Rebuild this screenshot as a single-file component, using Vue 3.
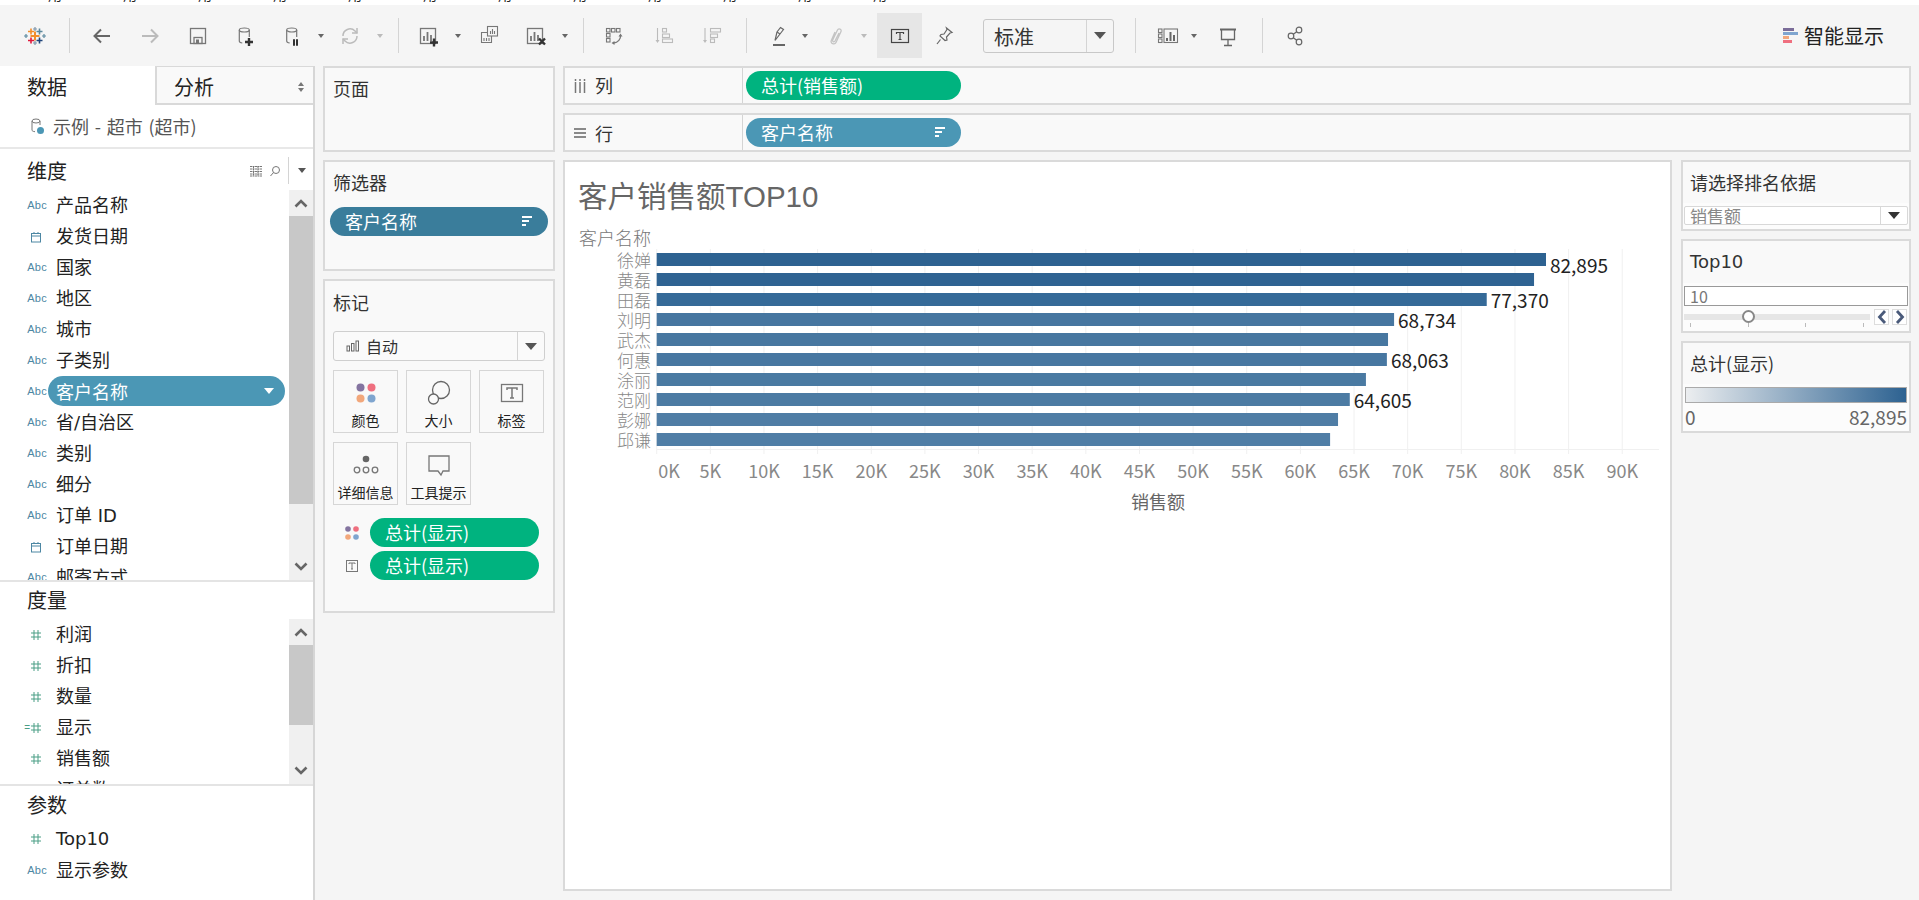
<script setup>
const dims = [
  { n: '产品名称', t: 'abc' }, { n: '发货日期', t: 'date' }, { n: '国家', t: 'abc' }, { n: '地区', t: 'abc' },
  { n: '城市', t: 'abc' }, { n: '子类别', t: 'abc' }, { n: '客户名称', t: 'abc', pill: true }, { n: '省/自治区', t: 'abc' },
  { n: '类别', t: 'abc' }, { n: '细分', t: 'abc' }, { n: '订单 ID', t: 'abc' }, { n: '订单日期', t: 'date' }, { n: '邮寄方式', t: 'abc' }
]
const measures = [
  { n: '利润' }, { n: '折扣' }, { n: '数量' }, { n: '显示', calc: true }, { n: '销售额' }, { n: '订单数' }
]
const x0 = 656.7
const k = 0.010728
const bars = [
  { name: '徐婵', v: 82895, c: '#2d6291', show: true, dy: 5 },
  { name: '黄磊', v: 81780, c: '#2f6392' },
  { name: '田磊', v: 77370, c: '#356a98', show: true, dy: 0 },
  { name: '刘明', v: 68734, c: '#4676a0', show: true, dy: 0 },
  { name: '武杰', v: 68170, c: '#4777a0' },
  { name: '何惠', v: 68063, c: '#4777a1', show: true, dy: 0 },
  { name: '涂丽', v: 66110, c: '#4a7aa2' },
  { name: '范刚', v: 64605, c: '#4c7ba3', show: true, dy: 0 },
  { name: '彭娜', v: 63510, c: '#4f7da5' },
  { name: '邱谦', v: 62770, c: '#507ea6' }
].map((b, i) => ({
  ...b,
  y: 253 + i * 20,
  w: b.v * k,
  label: b.v.toLocaleString('en-US')
}))
const ticks = Array.from({ length: 19 }, (_, i) => ({
  x: x0 + i * 5000 * k,
  lx: i === 0 ? 669 : x0 + i * 5000 * k,
  t: i * 5 + 'K'
}))
const topBits = Array.from({ length: 12 })
</script>

<template>
  <div class="page">
    <div class="strip"><span v-for="(_, i) in topBits" :key="i">用</span></div>

    <header class="toolbar">
      <span class="logo">
        <svg width="24" height="24" viewBox="0 0 24 24" fill="none" stroke-width="1.6">
          <path d="M12 7.500v9M7.500 12h9" stroke="#f28e2b" stroke-width="2"/>
          <path d="M8 4.500v6M5 7.500h6" stroke="#f28e2b"/>
          <path d="M16.500 4.500v6M13.500 7.500h6" stroke="#5b879b"/>
          <path d="M8 13.500v6M5 16.500h6" stroke="#e1193c"/>
          <path d="M16.500 13.500v6M13.500 16.500h6" stroke="#1f447a"/>
          <path d="M12 3v4M10 5h4M12 17v4M10 19h4" stroke="#7e96ab" stroke-width="1.2"/>
          <path d="M3 10v4M1 12h4M21 10v4M19 12h4" stroke="#5d8aa0" stroke-width="1.2"/>
        </svg>
      </span>
      <i class="sep"></i>
      <span class="ic w48 ml8"><svg width="24" height="24" viewBox="0 0 24 24" fill="none" stroke="#666" stroke-width="2"><path d="M20 12H5M11 5.500 4.500 12l6.500 6.500"/></svg></span>
      <span class="ic w48"><svg width="24" height="24" viewBox="0 0 24 24" fill="none" stroke="#bbb" stroke-width="2"><path d="M4 12h15M13 5.500l6.500 6.500-6.500 6.500"/></svg></span>
      <span class="ic w48"><svg width="24" height="24" viewBox="0 0 24 24" fill="none" stroke="#777" stroke-width="1.300"><rect x="4.500" y="4.500" width="15" height="15"/><rect x="8" y="13.500" width="8" height="6"/><rect x="10" y="15.500" width="3" height="4" fill="#777" stroke="none"/></svg></span>
      <span class="ic w48"><svg width="24" height="24" viewBox="0 0 24 24" fill="none" stroke="#777" stroke-width="1.200"><ellipse cx="10.300" cy="6" rx="5" ry="2"/><path d="M5.300 6v11c0 1 1 1.800 3 2M15.300 6v7"/><path d="M15 14v8M11 18h8" stroke="#333" stroke-width="2.400"/></svg></span>
      <span class="ic w44"><svg width="24" height="24" viewBox="0 0 24 24" fill="none" stroke="#777" stroke-width="1.200"><ellipse cx="11.700" cy="6" rx="5" ry="2"/><path d="M6.700 6v11c0 1 1 1.800 3 2M16.700 6v7"/><path d="M14 15.300v6.400M17 15.300v6.400" stroke="#333" stroke-width="2"/></svg></span>
      <i class="caret ml3"></i>
      <span class="ic w44 ml3"><svg width="24" height="24" viewBox="0 0 24 24" fill="none" stroke="#bbb" stroke-width="1.500"><path d="M5 12a7 7 0 0 1 12-5l2 2M19 12a7 7 0 0 1-12 5l-2-2"/><path d="M19 4v5h-5M5 20v-5h5"/></svg></span>
      <i class="caret light ml4"></i>
      <i class="sep ml14"></i>
      <span class="ic w44 ml8"><svg width="24" height="24" viewBox="0 0 24 24" fill="none" stroke="#777" stroke-width="1.300"><rect x="3.500" y="4.500" width="15" height="15"/><path d="M7 17v-5M10.500 17V8M14 17v-6" stroke-width="1.800"/><path d="M17 14.500v8M13 18.500h8" stroke="#333" stroke-width="2.400"/></svg></span>
      <i class="caret ml3"></i>
      <span class="ic w44 ml5"><svg width="24" height="24" viewBox="0 0 24 24" fill="none" stroke="#777" stroke-width="1.100"><rect x="10.500" y="2.500" width="10" height="9.500"/><path d="M13.500 10V7M15.500 10V5M17.500 10V7"/><path d="M10.500 8.500H4.500v10h10V12"/><path d="M7 17v-3M9.500 17v-3M12 17v-3"/></svg></span>
      <span class="ic w44 ml3"><svg width="24" height="24" viewBox="0 0 24 24" fill="none" stroke="#777" stroke-width="1.300"><rect x="3.500" y="4.500" width="15" height="15"/><path d="M7 17v-5M10.500 17V8M14 17v-6" stroke-width="1.800"/><path d="M15 14.500l6 6M21 14.500l-6 6" stroke="#333" stroke-width="2.400"/></svg></span>
      <i class="caret ml3"></i>
      <i class="sep ml14"></i>
      <span class="ic w44 ml9"><svg width="24" height="24" viewBox="0 0 24 24" fill="none" stroke="#777" stroke-width="1.100"><rect x="3.500" y="4.500" width="3.500" height="3.500"/><rect x="8.500" y="4.500" width="3.500" height="3.500"/><rect x="13.500" y="4.500" width="3.500" height="3.500"/><rect x="3.500" y="9.500" width="3.500" height="3.500"/><rect x="3.500" y="14.500" width="3.500" height="3.500"/><path d="M17.500 11c.5 4-2.500 7.500-7 8" stroke-width="1.300"/><path d="M15.500 12.500 17.500 9.500l2 3zM11.500 17l-3 2 3 2z" fill="#777" stroke="none"/></svg></span>
      <span class="ic w44 ml5"><svg width="24" height="24" viewBox="0 0 24 24" fill="none" stroke="#bbb" stroke-width="1.100"><path d="M5.500 4v13"/><path d="M3.500 16h4l-2 3z" fill="#bbb" stroke="none"/><rect x="10.500" y="4.500" width="4" height="3.500"/><rect x="10.500" y="10" width="7" height="3.500"/><rect x="10.500" y="15" width="10" height="3.500"/></svg></span>
      <span class="ic w44 ml3"><svg width="24" height="24" viewBox="0 0 24 24" fill="none" stroke="#bbb" stroke-width="1.100"><path d="M6 4v13"/><path d="M4 16h4l-2 3z" fill="#bbb" stroke="none"/><rect x="11.500" y="4.500" width="10" height="3.500"/><rect x="11.500" y="10" width="7" height="3.500"/><rect x="11.500" y="15" width="4" height="3.500"/></svg></span>
      <i class="sep ml13"></i>
      <span class="ic w44 ml10"><svg width="24" height="24" viewBox="0 0 24 24" fill="none" stroke="#666" stroke-width="1.200"><path d="M8 16.500 10 8l3.500-4.500 3 2L13 10z"/><path d="M10 8l3 2"/><path d="M6 21h12" stroke="#666" stroke-width="2"/></svg></span>
      <i class="caret"></i>
      <span class="ic w44 ml5"><svg width="24" height="24" viewBox="0 0 24 24" fill="none" stroke="#c4c4c4" stroke-width="1.300"><path d="M15 9l-4 8c-.8 1.500-3 .6-2.300-1l4.800-10c1-2.200 4.500-.8 3.500 1.500L12 18.500c-1.300 2.700-6 1-4.700-2L11 8"/></svg></span>
      <i class="caret light ml2"></i>
      <span class="ic tbtn ml9"><svg width="24" height="24" viewBox="0 0 24 24" fill="none" stroke="#444" stroke-width="1.200"><rect x="3.500" y="5.500" width="17" height="13"/><path d="M8.500 10V8.500h7V10M12 8.500v7M10.500 15.500h3"/></svg></span>
      <span class="ic w44"><svg width="24" height="24" viewBox="0 0 24 24" fill="none" stroke="#666" stroke-width="1.200"><path d="M14.500 4 20 8.500l-2 .5-3.500 4 .5 3-2 .5-5-4.500 1-1.500 3-.5 3-4.500z"/><path d="M8.500 15.500 5 20"/></svg></span>
      <div class="fit ml17"><span class="fit-t">标准</span><span class="fit-a"><i class="tri big"></i></span></div>
      <i class="sep ml21"></i>
      <span class="ic w44 ml10"><svg width="24" height="24" viewBox="0 0 24 24" fill="none" stroke="#777" stroke-width="1.100"><rect x="2.500" y="5" width="3.500" height="3.500"/><rect x="2.500" y="10" width="3.500" height="3.500"/><rect x="2.500" y="15" width="3.500" height="3.500"/><rect x="8" y="5" width="13.500" height="13.500"/><path d="M11 17v-3M14.500 17V8M18 17v-6" stroke="#666" stroke-width="2"/></svg></span>
      <i class="caret"></i>
      <span class="ic w44 ml8"><svg width="24" height="24" viewBox="0 0 24 24" fill="none" stroke="#666" stroke-width="1.300"><path d="M4 5.500h16" stroke-width="2"/><path d="M5.500 5.500v10h13v-10M12 15.500v6M8 21.500h8"/></svg></span>
      <i class="sep ml12"></i>
      <span class="ic w44 ml10"><svg width="24" height="24" viewBox="0 0 24 24" fill="none" stroke="#666" stroke-width="1.200"><circle cx="16" cy="6" r="2.800"/><circle cx="8" cy="12" r="2.800"/><circle cx="16" cy="18" r="2.800"/><path d="m10.300 10.300 3.400-2.600M10.300 13.700l3.400 2.600"/></svg></span>
      <div class="smart">
        <svg width="16" height="18" viewBox="0 0 16 18"><rect x="1" y="1" width="11" height="3" fill="#7b6d99"/><rect x="1" y="5" width="15" height="3" fill="#7fa5cf"/><rect x="1" y="9" width="6" height="3" fill="#f2a77b"/><rect x="1" y="13" width="9" height="3" fill="#ef6f7f"/></svg>
        <span>智能显示</span>
      </div>
    </header>

    <main class="main">
      <aside class="side">
        <div class="tabs">
          <div class="tab on">数据</div>
          <div class="tab off">分析<span class="updown"></span></div>
        </div>
        <div class="source">
          <svg width="16" height="20" viewBox="0 0 16 20" fill="none" stroke="#777" stroke-width="1"><ellipse cx="6" cy="5" rx="4" ry="2"/><path d="M2 5v9c0 1 1 1.500 3 1.700M10 5v4"/><circle cx="10.500" cy="14.500" r="3.500" fill="#4b97b5" stroke="none"/></svg>
          <span>示例 - 超市 (超市)</span>
        </div>
        <div class="head dim-head">
          <span class="head-t">维度</span>
          <span class="head-tools">
            <svg width="14" height="12" viewBox="0 0 14 12" stroke="#777" fill="none"><path d="M1 1.500h12M1 4h12M1 6.500h12M1 9h12M1 11h12M4.500 1v10M9 1v10" stroke-dasharray="2 .5"/></svg>
            <svg width="12" height="12" viewBox="0 0 12 12" stroke="#777" fill="none"><circle cx="7" cy="5" r="3.500"/><path d="M4.500 7.500 1.500 11"/></svg>
            <i class="vline"></i>
            <i class="tri small"></i>
          </span>
        </div>
        <div class="list dim">
          <div class="rows">
            <div v-for="d in dims" :key="d.n" class="row">
              <span class="ficon">
                <span v-if="d.t === 'abc'" class="abc">Abc</span>
                <svg v-else width="12" height="12" viewBox="0 0 12 12" fill="none" stroke="#4d87a3"><rect x="1.500" y="2.500" width="9" height="8.500"/><path d="M1.500 5h9M4 1v2M8 1v2"/></svg>
              </span>
              <span v-if="d.pill" class="pill side-pill">{{ d.n }}<i class="tri white"></i></span>
              <span v-else class="fname">{{ d.n }}</span>
            </div>
          </div>
          <div class="scroll">
            <span class="sarrow"><svg width="14" height="10" viewBox="0 0 14 10" fill="none" stroke="#666" stroke-width="2.600"><path d="M1.500 8.500 7 3l5.500 5.500"/></svg></span>
            <span class="thumb dim-thumb"></span>
            <span class="sfill"></span>
            <span class="sarrow"><svg width="14" height="10" viewBox="0 0 14 10" fill="none" stroke="#666" stroke-width="2.600"><path d="M1.500 1.500 7 7l5.500-5.500"/></svg></span>
          </div>
        </div>
        <div class="head line measure-head"><span class="head-t">度量</span></div>
        <div class="list mea">
          <div class="rows">
            <div v-for="m in measures" :key="m.n" class="row">
              <span class="ficon">
                <i v-if="m.calc" class="calc">=</i>
                <svg width="12" height="12" viewBox="0 0 12 12" fill="none" stroke="#4a9e85" stroke-width="1"><path d="M4 1v10M8 1v10M1 4h10M1 8h10"/></svg>
              </span>
              <span class="fname">{{ m.n }}</span>
            </div>
          </div>
          <div class="scroll">
            <span class="sarrow"><svg width="14" height="10" viewBox="0 0 14 10" fill="none" stroke="#666" stroke-width="2.600"><path d="M1.500 8.500 7 3l5.500 5.500"/></svg></span>
            <span class="thumb mea-thumb"></span>
            <span class="sfill"></span>
            <span class="sarrow"><svg width="14" height="10" viewBox="0 0 14 10" fill="none" stroke="#666" stroke-width="2.600"><path d="M1.500 1.500 7 7l5.500-5.500"/></svg></span>
          </div>
        </div>
        <div class="head line param-head"><span class="head-t">参数</span></div>
        <div class="row">
          <span class="ficon"><svg width="12" height="12" viewBox="0 0 12 12" fill="none" stroke="#4a9e85"><path d="M4 1v10M8 1v10M1 4h10M1 8h10"/></svg></span>
          <span class="fname">Top10</span>
        </div>
        <div class="row param-2">
          <span class="ficon"><span class="abc">Abc</span></span>
          <span class="fname">显示参数</span>
        </div>
      </aside>

      <section class="cards">
        <div class="card c-page"><div class="card-t">页面</div></div>
        <div class="card c-filter">
          <div class="card-t">筛选器</div>
          <div class="pill filter-pill">客户名称<svg class="sorti" width="12" height="12" viewBox="0 0 12 12" fill="#fff"><rect x="1" y="1" width="10" height="2"/><rect x="1" y="5" width="7" height="2"/><rect x="1" y="9" width="4" height="2"/></svg></div>
        </div>
        <div class="card c-marks">
          <div class="card-t">标记</div>
          <div class="mark-sel">
            <span class="mark-sel-t">
              <svg width="14" height="12" viewBox="0 0 14 12" fill="none" stroke="#666"><rect x="1" y="6" width="2.500" height="5"/><rect x="5.500" y="3.500" width="2.500" height="7.500"/><rect x="10" y="1" width="2.500" height="10"/></svg>
              自动
            </span>
            <span class="mark-sel-a"><i class="tri big"></i></span>
          </div>
          <div class="mark-grid">
            <div class="mbtn">
              <svg width="28" height="28" viewBox="0 0 28 28"><circle cx="8.500" cy="8.500" r="4" fill="#8474a0"/><circle cx="19.500" cy="8.500" r="4" fill="#ef6f7f"/><circle cx="8.500" cy="19.500" r="4" fill="#f2a77b"/><circle cx="19.500" cy="19.500" r="4" fill="#7fa5cf"/></svg>
              <span>颜色</span>
            </div>
            <div class="mbtn">
              <svg width="28" height="28" viewBox="0 0 28 28" fill="none" stroke="#666" stroke-width="1.300"><circle cx="16" cy="11" r="8.500"/><circle cx="8.500" cy="20" r="5" fill="#fafafa"/></svg>
              <span>大小</span>
            </div>
            <div class="mbtn">
              <svg width="28" height="28" viewBox="0 0 28 28" fill="none" stroke="#777" stroke-width="1.300"><rect x="3.500" y="5.500" width="21" height="17"/><path d="M9 11v-2h10v2M14 9v10M12 19h4" stroke-width="1.500"/></svg>
              <span>标签</span>
            </div>
            <div class="mbtn">
              <svg width="28" height="28" viewBox="0 0 28 28" fill="none" stroke="#777" stroke-width="1.300"><circle cx="14" cy="8" r="3.300" fill="#666" stroke="none"/><circle cx="5" cy="19" r="2.800"/><circle cx="14" cy="19" r="2.800"/><circle cx="23" cy="19" r="2.800"/></svg>
              <span>详细信息</span>
            </div>
            <div class="mbtn">
              <svg width="28" height="28" viewBox="0 0 28 28" fill="none" stroke="#777" stroke-width="1.300"><path d="M4 5h20v15h-6l-2 4-3-4H4z"/></svg>
              <span>工具提示</span>
            </div>
          </div>
          <div class="enc">
            <svg width="16" height="16" viewBox="0 0 16 16"><circle cx="4" cy="4" r="2.800" fill="#8474a0"/><circle cx="12" cy="4" r="2.800" fill="#ef6f7f"/><circle cx="4" cy="12" r="2.800" fill="#f2a77b"/><circle cx="12" cy="12" r="2.800" fill="#7fa5cf"/></svg>
            <div class="pill green enc-pill">总计(显示)</div>
          </div>
          <div class="enc">
            <svg width="16" height="16" viewBox="0 0 16 16" fill="none" stroke="#777"><rect x="2.500" y="2.500" width="11" height="11"/><path d="M5 6V5h6v1M8 5v6M7 11h2"/></svg>
            <div class="pill green enc-pill">总计(显示)</div>
          </div>
        </div>
      </section>

      <section class="work">
        <div class="shelf">
          <div class="shelf-l"><svg width="12" height="14" viewBox="0 0 12 14" stroke="#777" stroke-width="1.500"><path d="M1.500 3v11M6 3v11M10.500 3v11M1.500 0v2M6 0v2M10.500 0v2" fill="none"/></svg><span class="shelf-n">列</span></div>
          <div class="shelf-r"><div class="pill green shelf-pill">总计(销售额)</div></div>
        </div>
        <div class="shelf">
          <div class="shelf-l"><svg width="12" height="12" viewBox="0 0 12 12" stroke="#666" stroke-width="1.500"><path d="M0 2h12M0 6h12M0 10h12" fill="none"/></svg><span>行</span></div>
          <div class="shelf-r"><div class="pill blue shelf-pill">客户名称<svg class="sorti" width="12" height="12" viewBox="0 0 12 12" fill="#fff"><rect x="1" y="1" width="10" height="2"/><rect x="1" y="5" width="7" height="2"/><rect x="1" y="9" width="4" height="2"/></svg></div></div>
        </div>
        <div class="body">
          <div class="view">
            <svg class="chart" width="1105" height="727" viewBox="565 162 1105 727">
              <text x="578" y="196" class="title" dominant-baseline="central">客户销售额TOP10</text>
              <text x="651" y="237" class="axis-t" text-anchor="end" dominant-baseline="central">客户名称</text>
              <line v-for="t in ticks" :key="t.t" :x1="t.x" :x2="t.x" y1="249" y2="454" class="grid"/>
              <line x1="657" x2="1659" y1="449.500" y2="449.500" class="grid"/>
              <g v-for="b in bars" :key="b.name">
                <text x="651" :y="b.y + 6.5" class="name" text-anchor="end" dominant-baseline="central">{{ b.name }}</text>
                <rect :x="x0" :y="b.y" :width="b.w" height="13" :fill="b.c"/>
                <text v-if="b.show" :x="x0 + b.w + 4" :y="b.y + 6 + b.dy" class="val" dominant-baseline="central">{{ b.label }}</text>
              </g>
              <text v-for="t in ticks" :key="t.t + 'l'" :x="t.lx" y="470" class="tick" text-anchor="middle" dominant-baseline="central">{{ t.t }}</text>
              <text x="1158" y="501" class="axis-x" text-anchor="middle" dominant-baseline="central">销售额</text>
            </svg>
          </div>
          <div class="right">
            <div class="rcard r1">
              <div class="rtitle">请选择排名依据</div>
              <div class="rbody">
                <div class="dd"><span class="dd-t">销售额</span><span class="dd-a"><i class="tri big"></i></span></div>
              </div>
            </div>
            <div class="rcard r2">
              <div class="rtitle latin">Top10</div>
              <div class="rbody">
                <div class="num">10</div>
                <div class="sl">
                  <div class="sl-track">
                    <span class="sl-bar"></span>
                    <span class="sl-knob"></span>
                    <span class="sl-ticks"><i></i><i></i><i></i><i></i></span>
                  </div>
                  <span class="stp"><svg width="10" height="14" viewBox="0 0 10 14" fill="none" stroke="#4a5a7a" stroke-width="2.800"><path d="M8 1 2.500 7 8 13"/></svg></span>
                  <span class="stp"><svg width="10" height="14" viewBox="0 0 10 14" fill="none" stroke="#4a5a7a" stroke-width="2.800"><path d="M2 1l5.500 6L2 13"/></svg></span>
                </div>
              </div>
            </div>
            <div class="rcard r3">
              <div class="rtitle">总计(显示)</div>
              <div class="rbody lg">
                <div class="ramp"></div>
                <div class="ramp-l"><span>0</span><span>82,895</span></div>
              </div>
            </div>
          </div>
        </div>
      </section>
    </main>
  </div>
</template>

<style>
html, body { margin: 0; background: #f5f5f5; overflow: hidden; }
</style>

<style scoped>
.page { width: 1919px; height: 900px; display: flex; flex-direction: column; overflow: hidden; font-family: "Noto Sans CJK SC", "Noto Sans", sans-serif; color: #222; background: #f5f5f5; font-size: 18px; }
i { display: block; font-style: normal; }

.strip { height: 5px; background: #fff; overflow: hidden; display: flex; padding-left: 48px; gap: 61px; font-size: 14px; line-height: 14px; color: #222; flex: none; }
.strip span { margin-top: -13px; height: 14px; }

.toolbar { height: 61px; flex: none; display: flex; align-items: center; background: #f5f5f5; }
.logo { width: 69px; display: flex; justify-content: center; }
.sep { width: 1px; height: 35px; background: #d4d4d4; flex: none; }
.ic { display: flex; align-items: center; justify-content: center; flex: none; }
.w48 { width: 48px; }
.w44 { width: 44px; }
.tbtn { width: 45px; height: 45px; background: #e6e6e6; }
.caret { width: 8px; flex: none; height: 8px; position: relative; }
.caret::after { content: ""; position: absolute; left: 1px; top: 2px; border-left: 3px solid transparent; border-right: 3px solid transparent; border-top: 4px solid #666; }
.caret.light::after { border-top-color: #bbb; }
.ml2 { margin-left: 2px; } .ml3 { margin-left: 3px; } .ml4 { margin-left: 4px; } .ml5 { margin-left: 5px; }
.ml8 { margin-left: 8px; } .ml9 { margin-left: 9px; } .ml10 { margin-left: 10px; } .ml12 { margin-left: 12px; }
.ml13 { margin-left: 13px; } .ml14 { margin-left: 14px; } .ml17 { margin-left: 17px; } .ml21 { margin-left: 21px; }

.tri { width: 0; height: 0; border-left: 5px solid transparent; border-right: 5px solid transparent; border-top: 6px solid #555; }
.tri.big { border-left-width: 6px; border-right-width: 6px; border-top-width: 7px; }
.tri.small { border-left-width: 4px; border-right-width: 4px; border-top-width: 5px; }
.tri.white { border-left-width: 5px; border-right-width: 5px; border-top-width: 6px; border-top-color: #fff; }

.fit { width: 131px; height: 34px; box-sizing: border-box; border: 1px solid #c8c8c8; border-radius: 3px; display: flex; flex: none; }
.fit-t { flex: 1; font-size: 20px; line-height: 34px; padding-left: 10px; color: #333; }
.fit-a { width: 26px; border-left: 1px solid #d4d4d4; display: flex; align-items: center; justify-content: center; }

.smart { margin-left: auto; padding-right: 35px; display: flex; align-items: center; gap: 6px; font-size: 20px; color: #222; }

.main { flex: 1; display: flex; min-height: 0; }
.side { width: 315px; flex: none; box-sizing: border-box; background: #fff; border-right: 2px solid #d6d6d6; display: flex; flex-direction: column; }
.tabs { height: 39px; display: flex; flex: none; }
.tab { font-size: 20px; box-sizing: border-box; }
.tab.on { width: 155px; padding-left: 27px; line-height: 42px; }
.tab.off { flex: 1; padding-left: 17px; line-height: 40px; background: #f9f9f9; border-left: 2px solid #d9d9d9; border-bottom: 2px solid #d9d9d9; border-top: 1px solid #d9d9d9; position: relative; }
.updown { position: absolute; right: 9px; top: 15px; width: 0; height: 0; border-left: 3px solid transparent; border-right: 3px solid transparent; border-bottom: 4px solid #777; }
.updown::after { content: ""; position: absolute; left: -3px; top: 6px; border-left: 3px solid transparent; border-right: 3px solid transparent; border-top: 4px solid #777; }
.source { height: 44px; flex: none; box-sizing: border-box; border-bottom: 2px solid #e8e8e8; display: flex; align-items: center; padding-left: 30px; gap: 7px; font-size: 18px; color: #555; word-spacing: 1.700px; }
.head { height: 41px; flex: none; display: flex; align-items: center; padding-left: 27px; box-sizing: border-box; }
.dim-head { padding-top: 2px; }
.head-t { font-size: 20px; color: #222; }
.head-tools { margin-left: auto; padding-right: 7px; display: flex; align-items: center; gap: 0; }
.head-tools svg:nth-child(2) { margin-left: 6px; }
.vline { width: 1px; height: 27px; background: #d4d4d4; margin-left: 7px; margin-right: 9px; }
.list { display: flex; overflow: hidden; flex: none; }
.list.dim { height: 390px; }
.list.mea { height: 165px; }
.rows { flex: 1; min-width: 0; }
.row { height: 31px; display: flex; align-items: center; flex: none; position: relative; }
.param-2 { margin-top: 1px; }
.ficon { width: 56px; height: 31px; flex: none; display: flex; align-items: center; justify-content: flex-end; padding-right: 12px; box-sizing: border-box; position: relative; }
.abc { font: 11px/1 "Liberation Sans", sans-serif; color: #4d87a3; letter-spacing: .3px; margin-right: -3px; }
.ficon > svg { margin-right: 2px; }
.calc { font: 10px/1 "Liberation Sans", sans-serif; color: #4a9e85; }
.fname { font-size: 18px; color: #222; white-space: nowrap; line-height: 31px; font-family: "DejaVu Sans", "Noto Sans CJK SC", sans-serif; }
.scroll { width: 24px; flex: none; background: #f0f0f0; display: flex; flex-direction: column; }
.sarrow { height: 26px; flex: none; display: flex; align-items: center; justify-content: center; }
.thumb { background: #c8c8c8; flex: none; }
.dim-thumb { height: 288px; }
.mea-thumb { height: 80px; }
.sfill { flex: 1; }
.line { border-top: 2px solid #e4e4e4; }
.measure-head { height: 39px; padding-bottom: 2px; }
.param-head { height: 39px; }

.pill { border-radius: 15px; color: #fff; height: 29px; line-height: 28px; box-sizing: border-box; font-size: 18px; position: relative; flex: none; }
.side-pill { position: absolute; left: 48px; top: 0; width: 237px; height: 30px; padding-left: 8px; background: #4b97b5; display: flex; align-items: center; justify-content: space-between; padding-right: 42px; box-sizing: border-box; }
.side-pill .tri { position: absolute; right: 11px; top: 12px; }
.green { background: #00b37f; }
.blue { background: #4b97b5; }
.sorti { position: absolute; right: 15px; top: 8px; }

.cards { width: 232px; flex: none; margin-left: 8px; display: flex; flex-direction: column; gap: 8px; }
.card { box-sizing: border-box; border: 2px solid #dadada; background: #f9f9f9; flex: none; }
.c-page { height: 86px; }
.c-filter { height: 111px; }
.c-marks { height: 334px; }
.card-t { font-size: 18px; line-height: 24px; padding: 8px 0 0 8px; color: #333; }
.c-marks .card-t { padding-top: 9px; }
.filter-pill { margin: 13px 0 0 5px; width: 218px; background: #3a7d9b; padding-left: 15px; }

.mark-sel { margin: 17px 0 0 8px; width: 212px; height: 30px; box-sizing: border-box; border: 1px solid #cfcfcf; border-radius: 3px; display: flex; background: #fafafa; }
.mark-sel-t { flex: 1; display: flex; align-items: center; gap: 6px; padding-left: 12px; font-size: 16px; color: #333; }
.mark-sel-a { width: 26px; border-left: 1px solid #d4d4d4; display: flex; align-items: center; justify-content: center; }
.mark-grid { margin: 9px 0 0 8px; display: grid; grid-template-columns: 65px 65px 65px; column-gap: 8px; row-gap: 9px; width: 212px; }
.mbtn { height: 63px; box-sizing: border-box; border: 1px solid #d6d6d6; display: flex; flex-direction: column; align-items: center; font-size: 14px; line-height: 20px; color: #222; padding-top: 8px; white-space: nowrap; }
.mbtn svg { margin-bottom: 3px; }
.enc { display: flex; align-items: center; margin-left: 19px; height: 29px; margin-bottom: 4px; }
.mark-grid + .enc { margin-top: 13px; }
.enc svg { flex: none; margin-right: 10px; }
.enc-pill { width: 169px; padding-left: 15px; }

.work { width: 1348px; flex: none; margin-left: 8px; display: flex; flex-direction: column; gap: 8px; }
.shelf { height: 39px; box-sizing: border-box; border: 2px solid #dadada; background: #f9f9f9; display: flex; flex: none; }
.shelf-l { width: 178px; box-sizing: border-box; border-right: 1px solid #d4d4d4; display: flex; align-items: center; padding-left: 9px; gap: 9px; color: #333; }
.shelf-n { margin-top: -2px; }
.shelf-r { flex: 1; display: flex; align-items: center; padding-left: 3px; margin-top: -1px; }
.shelf-pill { width: 215px; padding-left: 15px; }
.body { display: flex; gap: 9px; flex: none; }
.view { width: 1109px; height: 731px; box-sizing: border-box; border: 2px solid #dadada; background: #fff; flex: none; }
.chart { display: block; font-family: "Liberation Sans", "Noto Sans CJK SC", sans-serif; }
.title { font-size: 29.500px; fill: #666; font-weight: 400; }
.axis-t { font-size: 18px; fill: #777; font-family: "Noto Sans CJK SC", sans-serif; font-weight: 300; }
.name { font-size: 17px; fill: #888; font-family: "Noto Sans CJK SC", sans-serif; font-weight: 300; }
.grid { stroke: #f0f0f0; stroke-width: 1; }
.val { font-size: 19px; fill: #222; font-family: "Noto Sans CJK SC", sans-serif; }
.tick { font-size: 18px; fill: #888; font-family: "Noto Sans CJK SC", sans-serif; }
.axis-x { font-size: 18px; fill: #666; font-family: "Noto Sans CJK SC", sans-serif; }

.right { width: 230px; flex: none; display: flex; flex-direction: column; gap: 8px; }
.rcard { box-sizing: border-box; border: 2px solid #dadada; background: #f9f9f9; flex: none; display: flex; flex-direction: column; }
.r1 { height: 71px; }
.r2 { height: 94px; }
.r3 { height: 92px; }
.rtitle { font-size: 18px; padding-left: 7px; color: #333; flex: none; line-height: 24px; padding-top: 8px; }
.rtitle.latin { font-family: "DejaVu Sans", sans-serif; padding-top: 9px; }
.r1 .rtitle { height: 41px; box-sizing: border-box; }
.r2 .rtitle { height: 42px; box-sizing: border-box; }
.r3 .rtitle { height: 41px; box-sizing: border-box; }
.rbody { flex: 1; background: #fcfcfc; padding: 3px 1px 0 1px; }
.dd { height: 19px; box-sizing: border-box; border: 1px solid #d8d8d8; border-radius: 2px; display: flex; background: #fff; }
.dd-t { flex: 1; font-size: 17px; line-height: 17px; color: #888; padding-left: 5px; overflow: hidden; }
.dd-a { width: 26px; border-left: 1px solid #d8d8d8; display: flex; align-items: center; justify-content: center; }
.dd-a .tri { border-top-color: #333; }
.num { height: 20px; box-sizing: border-box; border: 1px solid #999; background: #fff; font-size: 16px; line-height: 18px; color: #777; padding-left: 5px; }
.sl { display: flex; margin-top: 3px; }
.sl-track { width: 186px; height: 18px; position: relative; flex: none; }
.sl-bar { display: block; height: 6px; margin-top: 5px; background: #e6e6e6; }
.sl-knob { position: absolute; left: 58px; top: 1px; width: 13px; height: 13px; box-sizing: border-box; border: 2px solid #888; border-radius: 50%; background: #fff; }
.sl-ticks { display: flex; justify-content: space-between; padding: 0 6px 0 6px; margin-top: 3px; }
.sl-ticks i { width: 1px; height: 4px; background: #bbb; }
.stp { width: 15px; height: 16px; box-sizing: border-box; border: 1px solid #ddd; background: #fff; display: flex; align-items: center; justify-content: center; margin-left: 3px; flex: none; }
.stp:first-of-type { margin-left: 4px; }
.lg { padding: 3px 2px 0 2px; }
.ramp { height: 16px; box-sizing: border-box; border: 1px solid #aaa; background: linear-gradient(90deg, #eceef0, #2d6291); }
.ramp-l { display: flex; justify-content: space-between; font-size: 19px; line-height: 24px; color: #666; margin-top: 2px; }
</style>
